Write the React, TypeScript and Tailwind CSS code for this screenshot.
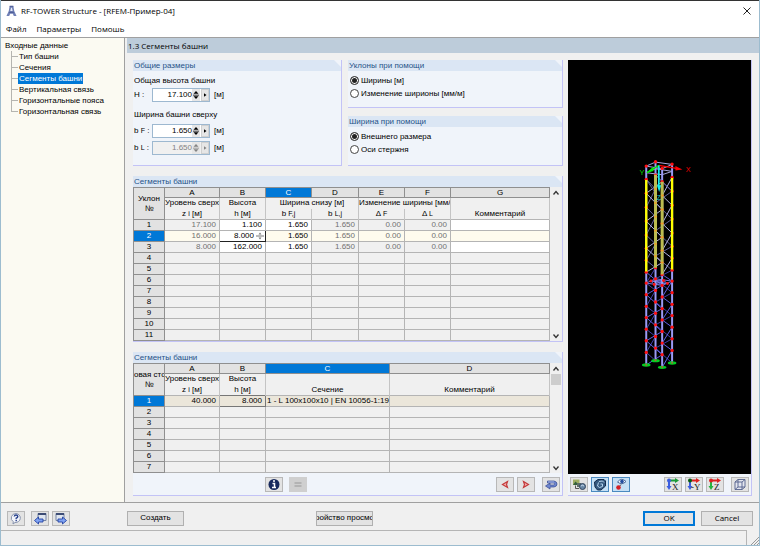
import { useState, type ReactNode } from "react";

const TREE = [
  "Тип башни",
  "Сечения",
  "Сегменты башни",
  "Вертикальная связь",
  "Горизонтальные пояса",
  "Горизонтальная связь",
];

const SEGMENTS = [
  { level: "17.100", height: "1.100", bf: "1.650", bl: "1.650", df: "0.00", dl: "0.00" },
  { level: "16.000", height: "8.000", bf: "1.650", bl: "1.650", df: "0.00", dl: "0.00" },
  { level: "8.000", height: "162.000", bf: "1.650", bl: "1.650", df: "0.00", dl: "0.00" },
];

function Panel({ title, children, className = "" }: { title: string; children: ReactNode; className?: string }) {
  return (
    <section className={`flex flex-col border-r border-b border-[#c3c3f6] bg-[#f0f4fa] ${className}`}>
      <h2 className="h-[11px] shrink-0 bg-[#dbe6f4] pl-px text-[8px] leading-[11px] text-[#1f5288] [clip-path:polygon(0_0,calc(100%-7px)_0,100%_7px,100%_100%,0_100%)]">
        {title}
      </h2>
      {children}
    </section>
  );
}

function Spinner({ id, label, value, disabled = false }: { id: string; label: ReactNode; value: string; disabled?: boolean }) {
  const [text, setText] = useState(value);
  return (
    <div className="flex items-center">
      <label htmlFor={id} className="w-[18px]">{label}</label>
      <div className={`flex h-[14px] w-[58px] border border-[#9db8d0] ${disabled ? "bg-[#f0f0f0] text-[#838383]" : "bg-white"}`}>
        <input
          id={id}
          value={text}
          disabled={disabled}
          onChange={(e) => setText(e.target.value)}
          className="w-[39px] bg-transparent text-right outline-none"
        />
        <button aria-label="Шаг" disabled={disabled} className="flex w-[8px] items-center justify-center bg-[#e6e6e6]">
          <svg viewBox="0 0 8 12" className="h-3 w-2" fill="currentColor">
            <path d="M4 2 6.500 4.800H1.500zM4 10 6.500 7.200H1.500zM1 5.700h6v.7H1z" />
          </svg>
        </button>
        <button aria-label="Список" disabled={disabled} className="ml-px flex w-[8px] items-center justify-center border border-[#d0d0d0] bg-[#e6e6e6]">
          <svg viewBox="0 0 6 8" className="h-2 w-[6px]" fill="currentColor">
            <path d="M2 2.200 4.500 4 2 5.800z" />
          </svg>
        </button>
      </div>
      <span className="ml-1">[м]</span>
    </div>
  );
}

function RadioRow({ name, label, defaultChecked }: { name: string; label: string; defaultChecked?: boolean }) {
  return (
    <label className="flex h-[13px] items-center gap-[2px]">
      <input
        type="radio"
        name={name}
        defaultChecked={defaultChecked}
        className="size-[9px] appearance-none rounded-full border border-[#444] bg-white checked:bg-[#222] checked:shadow-[inset_0_0_0_1px_white]"
      />
      {label}
    </label>
  );
}

function IconButton({ label, active, disabled, children }: { label: string; active?: boolean; disabled?: boolean; children: ReactNode }) {
  return (
    <button
      aria-label={label}
      disabled={disabled}
      className={`flex h-[15px] w-[18px] items-center justify-center border ${
        active ? "border-[#4b8ac0] bg-[#c5e0f5]" : disabled ? "border-[#cfcfcf] bg-[#cfcfcf]" : "border-[#b8b8b8] bg-[#e3e3e3]"
      }`}
    >
      <svg viewBox="0 0 16 13" className="h-[13px] w-4" fill="none">
        {children}
      </svg>
    </button>
  );
}

const letterCell = "h-[10px] border border-[#8f8f8f] bg-[#e2e2e2] p-0 font-normal leading-[9px]";
const letterActive = "h-[10px] border border-[#8f8f8f] bg-[#0078d7] p-0 font-normal leading-[9px] text-white";
const headCell = "h-[11px] overflow-hidden whitespace-nowrap border-x border-[#c4c4c4] p-0 font-normal leading-[10px]";
const rowHead = "h-[11px] border border-[#8f8f8f] bg-[#e2e2e2] p-0 font-normal leading-[10px]";
const rowHeadActive = "h-[11px] border border-[#8f8f8f] bg-[#0078d7] p-0 font-normal leading-[10px] text-white";
const cell = "h-[11px] border border-[#b4b4b4] p-0 pr-[3px] text-right leading-[10px]";

function ScrollBar({ thumb }: { thumb?: boolean }) {
  return (
    <div className="flex w-3 shrink-0 flex-col items-center justify-between bg-[#f0f0f0]">
      <div className="flex w-full flex-col items-center">
        <button aria-label="Вверх" className="h-[11px]">
          <svg viewBox="0 0 8 8" className="size-2" fill="none" stroke="#333" strokeWidth="1.3"><path d="m1.500 5.500 2.500-3 2.500 3" /></svg>
        </button>
        {thumb && <div className="h-[11px] w-[10px] bg-[#cdcdcd]" />}
      </div>
      <button aria-label="Вниз" className="h-[11px]">
        <svg viewBox="0 0 8 8" className="size-2" fill="none" stroke="#333" strokeWidth="1.3"><path d="m1.500 2.500 2.500 3 2.500-3" /></svg>
      </button>
    </div>
  );
}

function Sub({ children }: { children: ReactNode }) {
  return <small className="text-[7px] leading-none">{children}</small>;
}

function SegmentTable() {
  const [height, setHeight] = useState("8.000");
  return (
    <div className="flex">
      <div className="min-w-0 flex-1">
        <table className="w-full table-fixed border-collapse bg-[#f0f0f0]">
          <colgroup>
            <col className="w-[31px]" />
            <col className="w-[55px]" />
            <col className="w-[46px]" />
            <col className="w-[46px]" />
            <col className="w-[47px]" />
            <col className="w-[46px]" />
            <col className="w-[46px]" />
            <col />
          </colgroup>
          <thead>
            <tr>
              <th rowSpan={3} className="border border-[#8f8f8f] bg-[#e2e2e2] p-0 font-normal leading-[10px]">Уклон<br />№</th>
              <th className={letterCell}>A</th>
              <th className={letterCell}>B</th>
              <th className={letterActive}>C</th>
              <th className={letterCell}>D</th>
              <th className={letterCell}>E</th>
              <th className={letterCell}>F</th>
              <th className={letterCell}>G</th>
            </tr>
            <tr>
              <th className={headCell}>Уровень сверху</th>
              <th className={headCell}>Высота</th>
              <th className={headCell} colSpan={2}>Ширина снизу [м]</th>
              <th className={headCell} colSpan={2}>Изменение ширины [мм/м]</th>
              <th className={headCell} />
            </tr>
            <tr>
              <th className={headCell}>z <Sub>i</Sub> [м]</th>
              <th className={headCell}>h [м]</th>
              <th className={headCell}>b <Sub>F,j</Sub></th>
              <th className={headCell}>b <Sub>L,j</Sub></th>
              <th className={headCell}>Δ <Sub>F</Sub></th>
              <th className={headCell}>Δ <Sub>L</Sub></th>
              <th className={headCell}>Комментарий</th>
            </tr>
          </thead>
          <tbody>
            {SEGMENTS.map((s, i) => (
              <tr key={s.level} className={i === 1 ? "bg-[#fefbee]" : ""}>
                <th className={i === 1 ? rowHeadActive : rowHead}>{i + 1}</th>
                <td className={`${cell} text-[#707070]`}>{s.level}</td>
                {i === 1 ? (
                  <td className="h-[11px] border border-[#222] bg-white p-0">
                    <div className="flex h-[10px] items-center">
                      <input
                        aria-label="Высота h"
                        value={height}
                        onChange={(e) => setHeight(e.target.value)}
                        className="h-[10px] w-[34px] bg-transparent text-right leading-[10px] outline-none"
                      />
                      <svg viewBox="0 0 8 8" className="ml-[2px] size-2" fill="#777"><path d="M4 .5 5.500 2.500h-3zM0 3.500h8v1H0zM4 7.500 5.500 5.500h-3z" /></svg>
                    </div>
                  </td>
                ) : (
                  <td className={`${cell} bg-white`}>{s.height}</td>
                )}
                <td className={i === 1 ? cell : `${cell} bg-white`}>{s.bf}</td>
                <td className={`${cell} text-[#707070]`}>{s.bl}</td>
                <td className={`${cell} text-[#707070]`}>{s.df}</td>
                <td className={`${cell} text-[#707070]`}>{s.dl}</td>
                <td className={i === 1 ? cell : `${cell} bg-white`} />
              </tr>
            ))}
            {[4, 5, 6, 7, 8, 9, 10, 11].map((n) => (
              <tr key={n}>
                <th className={rowHead}>{n}</th>
                <td className={cell} /><td className={cell} /><td className={cell} /><td className={cell} />
                <td className={cell} /><td className={cell} /><td className={cell} />
              </tr>
            ))}
          </tbody>
        </table>
      </div>
      <ScrollBar />
    </div>
  );
}

function LegTable() {
  return (
    <div className="flex">
      <div className="min-w-0 flex-1">
        <table className="w-full table-fixed border-collapse bg-[#f0f0f0]">
          <colgroup>
            <col className="w-[31px]" />
            <col className="w-[55px]" />
            <col className="w-[46px]" />
            <col className="w-[124px]" />
            <col />
          </colgroup>
          <thead>
            <tr>
              <th rowSpan={3} className="overflow-hidden border border-[#8f8f8f] bg-[#e2e2e2] p-0 font-normal leading-[10px] whitespace-nowrap">овая сто<br />№</th>
              <th className={letterCell}>A</th>
              <th className={letterCell}>B</th>
              <th className={letterActive}>C</th>
              <th className={letterCell}>D</th>
            </tr>
            <tr>
              <th className={headCell}>Уровень сверху</th>
              <th className={headCell}>Высота</th>
              <th className={headCell} />
              <th className={headCell} />
            </tr>
            <tr>
              <th className={headCell}>z <Sub>i</Sub> [м]</th>
              <th className={headCell}>h [м]</th>
              <th className={headCell}>Сечение</th>
              <th className={headCell}>Комментарий</th>
            </tr>
          </thead>
          <tbody>
            <tr className="bg-[#ebe6da]">
              <th className={rowHeadActive}>1</th>
              <td className={cell}>40.000</td>
              <td className="h-[11px] border border-[#777] p-0 pr-[3px] text-right leading-[10px]">8.000</td>
              <td className="h-[11px] border border-[#b4b4b4] p-0 pl-px leading-[10px] whitespace-nowrap">1 - L 100x100x10 | EN 10056-1:19</td>
              <td className={cell} />
            </tr>
            {[2, 3, 4, 5, 6, 7].map((n) => (
              <tr key={n}>
                <th className={rowHead}>{n}</th>
                <td className={cell} /><td className={cell} /><td className={cell} /><td className={cell} />
              </tr>
            ))}
          </tbody>
        </table>
      </div>
      <ScrollBar thumb />
    </div>
  );
}

// x position and vertical shift of each tower leg
const LEGS = [
  { x: 80, dy: 0 },
  { x: 108, dy: -13 },
  { x: 158, dy: -6 },
  { x: 128, dy: 7 },
];
const LEVELS = [50, 90, 132, 174, 216, 258, 298, 334, 370, 403, 438, 473, 507, 542, 577, 612, 650];

function Tower() {
  return (
    <svg viewBox="0 0 184 414" preserveAspectRatio="xMidYMin meet" className="h-full w-full" fill="none">
      <g transform="translate(52 90) scale(.3333)">
        {LEGS.map((a, i) => {
          const b = LEGS[(i + 1) % 4];
          return LEVELS.slice(1, -1).map((y, j) => {
            const next = LEVELS[j + 2];
            const color = y < 370 ? (i > 1 ? "#b4b4e4" : "#62629e") : i > 1 ? "#6060e4" : "#4040a8";
            const flip = j % 2 === 0;
            return (
              <path
                key={`${i}-${j}`}
                d={`M${a.x} ${(flip ? y : next) + a.dy}L${b.x} ${(flip ? next : y) + b.dy}`}
                stroke={color}
                strokeWidth="3"
              />
            );
          });
        })}
        <path d="M80 90 108 132M108 76 128 97M128 97 158 126" stroke="#62629e" strokeWidth="3" />
        <path d="M80 50 108 38 158 45 128 58zM80 70 108 58 158 66 128 76z" stroke="#a8a8e0" strokeWidth="3" />
        <path d="M80 403 108 390 158 397 128 410zM94 397 104 407 144 404 132 395zM94 397 144 404M104 407 132 395" stroke="#7777dd" strokeWidth="3" />
        {LEGS.map((l) => (
          <path key={l.x} d={`M${l.x} ${50 + l.dy}V${650 + l.dy}`} stroke="#9a9af4" strokeWidth="6" />
        ))}
        {LEGS.map((l) =>
          LEVELS.slice(0, -1).map((y) => (
            <circle key={`${l.x}-${y}`} cx={l.x} cy={y + l.dy} r="5" fill="#ff1010" />
          )),
        )}
        <path d="M108 76V357M128 97V377" stroke="#bcbc50" strokeWidth="9" />
        <path d="M80 92V368M158 86V362" stroke="#ffff00" strokeWidth="7" />
        {[LEGS[1], LEGS[3]].map((l) =>
          LEVELS.slice(2, 8).map((y) => <circle key={`${l.x}-${y}`} cx={l.x} cy={y + l.dy} r="3" fill="#f59a22" />),
        )}
        <path d="M94 397h.1M104 407h.1M144 404h.1M132 395h.1" stroke="#ff1010" strokeWidth="9" strokeLinecap="round" />
        {LEGS.map((l) => (
          <g key={l.x}>
            <ellipse cx={l.x} cy={650 + l.dy} rx="13" ry="5" fill="#00d020" />
            <circle cx={l.x} cy={649 + l.dy} r="3" fill="#b0603a" />
          </g>
        ))}
        <path d="M118 48 170 57" stroke="#f00" strokeWidth="4" />
        <path d="m168 50 21 10-21 3z" fill="#f00" />
        <path d="M118 48 82 70" stroke="#0e0" strokeWidth="4" />
        <path d="m100 53-20 18 22-6z" fill="#0e0" />
        <path d="M118 48V112" stroke="#1ee" strokeWidth="5" />
        <path d="M112 108h13l-6 20z" fill="#1ee" />
        <text x="60" y="77" fontSize="22" fill="#0d0">Y</text>
        <text x="199" y="69" fontSize="22" fill="#e00">X</text>
        <text x="112" y="153" fontSize="20" fill="#1cc">Z</text>
      </g>
    </svg>
  );
}

function AxisIcon({ axis, h, v }: { axis: string; h: string; v: string }) {
  return (
    <>
      <path d="M3 2.500h8" stroke={h} strokeWidth="2" />
      <path d="m10 0 4 2.500L10 5z" fill={h} />
      <path d="M4 3v6" stroke={v} strokeWidth="2" />
      <path d="m1.500 8 2.500 4 2.500-4z" fill={v} />
      <circle cx="4" cy="2.500" r="2" fill={axis === "X" ? "#3b5ee0" : axis === "-Y" ? "#075c12" : "#d22"} />
      <text x={axis === "-Y" ? 5 : 7} y="12" fontSize="9" fill="#222" fontFamily="Liberation Serif, serif">{axis}</text>
    </>
  );
}

export default function App() {
  return (
    <div className="flex min-h-screen flex-col border-x border-[#9cbccf] bg-[#f0f0f0] font-['Liberation_Sans',Arial,sans-serif] text-[8px] leading-[10px] text-black">
      <header className="border-t border-[#333] bg-white">
        <div className="flex h-[20px] items-center pr-2 pl-[5px]">
          <svg viewBox="0 0 12 12" className="mr-1 h-3 w-[11px]" fill="none">
            <path d="M4 .5h4L9 6l2.500 5.500H8.500L7.500 9h-3l-1 2.500H.5L3 6z" fill="#6f7fb5" />
            <path d="M5.500 2.500h1L7.300 6H4.700z" fill="#e8ecf8" />
            <path d="M3.500 7.500h5M4 .8h4" stroke="#46558f" />
          </svg>
          <h1 className="flex-1 font-['Open_Sans',sans-serif] text-[8px]">RF-TOWER Structure - [RFEM-Пример-04]</h1>
          <button aria-label="Закрыть">
            <svg viewBox="0 0 8 8" className="size-2" stroke="#222" strokeWidth="1"><path d="m.5.5 7 7M7.500.5l-7 7" /></svg>
          </button>
        </div>
        <nav className="flex h-4 items-center gap-[10px] pb-px pl-[5px] font-['Open_Sans',sans-serif] text-[8px]">
          <button>Файл</button>
          <button>Параметры</button>
          <button>Помошь</button>
        </nav>
      </header>

      <div className="flex flex-1 border-y border-[#a0a0a0]">
        <aside className="w-[124px] shrink-0 border-r border-[#a0a0a0] bg-[#fbfaf2] pt-[2px] pl-1">
          <p className="h-[11px] leading-[11px]">Входные данные</p>
          <ul className="ml-[6px]">
            {TREE.map((item, i) => (
              <li key={item} className="flex h-[11px] items-center">
                <span className="flex h-full w-[7px] flex-col">
                  <span className="h-[6px] border-b border-l border-[#b5b5b0]" />
                  {i < TREE.length - 1 && <span className="h-[5px] border-l border-[#b5b5b0]" />}
                </span>
                <a href="#" className={i === 2 ? "bg-[#0078d7] px-px leading-[11px] text-white" : "px-px leading-[11px]"}>{item}</a>
              </li>
            ))}
          </ul>
        </aside>

        <main className="ml-[2px] flex min-w-0 flex-1 flex-col">
          <h2 className="h-[15px] bg-[#bdccda] pl-px font-['Open_Sans',sans-serif] text-[8px] leading-[15px]">1.3 Сегменты башни</h2>
          <div className="flex flex-1 gap-[5px] pt-[7px] pr-[7px] pb-[6px] pl-[6px]">
            <div className="flex min-w-0 flex-1 flex-col gap-[10px]">
              <div className="flex gap-[6px]">
                <Panel title="Общие размеры" className="h-[106px] min-w-0 flex-1">
                  <div className="flex flex-col px-px pt-[5px]">
                    <p className="mb-[2px]">Общая высота башни</p>
                    <Spinner id="total-height" label="H :" value="17.100" />
                    <p className="mt-2 mb-1">Ширина башни сверху</p>
                    <div className="flex flex-col gap-[3px]">
                      <Spinner id="width-f" label={<>b <Sub>F</Sub> :</>} value="1.650" />
                      <Spinner id="width-l" label={<>b <Sub>L</Sub> :</>} value="1.650" disabled />
                    </div>
                  </div>
                </Panel>
                <div className="flex w-1/2 flex-col gap-2">
                  <Panel title="Уклоны при помощи" className="h-12">
                    <div className="px-[2px] pt-[3px]">
                      <RadioRow name="slope" label="Ширины [м]" defaultChecked />
                      <RadioRow name="slope" label="Изменение ширионы [мм/м]" />
                    </div>
                  </Panel>
                  <Panel title="Ширина при помощи" className="flex-1">
                    <div className="px-[2px] pt-[3px]">
                      <RadioRow name="width" label="Внешнего размера" defaultChecked />
                      <RadioRow name="width" label="Оси стержня" />
                    </div>
                  </Panel>
                </div>
              </div>
              <Panel title="Сегменты башни">
                <SegmentTable />
              </Panel>
              <Panel title="Сегменты башни" className="flex-1">
                <LegTable />
                <div className="flex flex-1 items-center pr-[2px] pl-[132px]">
                  <IconButton label="Информация">
                    <circle cx="8" cy="6.500" r="5.500" fill="#182a5e" />
                    <path d="M7 3h2M6.500 5.500H8.500v4M6 9.500h4" stroke="#fff" strokeWidth="1.500" />
                  </IconButton>
                  <span className="ml-[6px] flex flex-1">
                    <IconButton label="Равно" disabled>
                      <path d="M4.500 5h7M4.500 8h7" stroke="#aaa" strokeWidth="1.500" />
                    </IconButton>
                  </span>
                  <div className="flex gap-[3px]">
                    <IconButton label="Предыдущий">
                      <path d="m10.500 3.500-5 3 5 3-1-3z" stroke="#c43a3a" strokeWidth="1.200" fill="#f2b0b0" />
                    </IconButton>
                    <IconButton label="Следующий">
                      <path d="m5.500 3.500 5 3-5 3 1-3z" stroke="#c43a3a" strokeWidth="1.200" fill="#f2b0b0" />
                    </IconButton>
                  </div>
                  <span className="ml-[7px] flex">
                    <IconButton label="Назад">
                      <path d="M4.500 3h6.500q3 .5 3 3t-3 3H7v2L2.500 8 7 5v2h3.500q1-.2 1-1t-1-1h-6z" fill="#6f87d0" stroke="#34488f" strokeWidth=".7" />
                      <path d="M5 4h6" stroke="#b9c7f0" strokeWidth=".8" />
                    </IconButton>
                  </span>
                </div>
              </Panel>
            </div>

            <section className="flex w-[184px] shrink-0 flex-col border-r border-b border-[#c3c3f6] bg-[#f0f4fa]">
              <div className="min-h-0 flex-1 bg-black">
                <Tower />
              </div>
              <div className="flex h-[21px] items-center gap-[3px] pr-[2px] pl-[2px]">
                <IconButton label="Показать модель">
                  <path d="M2 1.500h6.500v5.500H2z" fill="#9fae62" />
                  <path d="m2 7 2.500-3.500L8 7z" fill="#35613b" />
                  <path d="M6 5h4v4H6z" fill="#5f6f68" />
                  <path d="M4.500 7.500v3H8" stroke="#555" />
                  <circle cx="11.500" cy="8.500" r="3" fill="#6987a5" stroke="#34465e" />
                  <path d="M10 8q1.500-1.500 3 0" stroke="#cde" />
                </IconButton>
                <IconButton label="Рендеринг" active>
                  <path d="M2.500 4 6 1.500h6L13.500 3v5L9 12H5.500L3 9z" fill="#35597f" stroke="#132c4d" />
                  <path d="M6.500 4.500 5.500 8l2 1.500 3-1V6h-2M7 3.500l3.500-.5L12 4.500" stroke="#b5d4ee" />
                </IconButton>
                <IconButton label="Вид" active>
                  <path d="M4.500 4q4-5 8.500-.5-4 4-8.500.5z" fill="#f5f9ff" stroke="#486795" />
                  <circle cx="9" cy="3.500" r="1.800" fill="#214da0" />
                  <path d="M8 6.500 6 9" stroke="#555" />
                  <circle cx="5.500" cy="9.500" r="2.300" fill="#d41f25" />
                </IconButton>
                <span className="flex-1" />
                <IconButton label="Вид по X"><AxisIcon axis="X" h="#1b9b38" v="#3b5ee0" /></IconButton>
                <IconButton label="Вид против Y"><AxisIcon axis="-Y" h="#d22" v="#3b5ee0" /></IconButton>
                <IconButton label="Вид по Z"><AxisIcon axis="Z" h="#d22" v="#26b53f" /></IconButton>
                <span className="ml-[4px] flex">
                  <IconButton label="Изометрия">
                    <path d="M3 4h7v7.500H3zM6 1.500h7V9H6zM3 4l3-2.500M10 4l3-2.500M3 11.500 6 9M10 11.500 13 9" fill="#e4ebff" fillOpacity=".4" stroke="#53618c" strokeWidth=".9" />
                  </IconButton>
                </span>
              </div>
            </section>
          </div>
        </main>
      </div>

      <footer>
        <div className="flex h-[27px] items-center pt-[3px] pr-[6px] pl-[6px]">
          <div className="flex w-[120px] items-center">
            <IconButton label="Справка">
              <path d="M8 1.500a4.800 4.500 0 1 1-1 9L5 12l.3-2.300A4.800 4.500 0 0 1 8 1.500z" fill="#f3f5fb" stroke="#8793ad" />
              <path d="M6.300 4.500Q6.500 3 8 3t1.800 1.500Q9.800 5.700 8.200 6.200v1M8.200 8v1.200" stroke="#28418c" strokeWidth="1.400" />
            </IconButton>
            <span className="ml-[6px] flex gap-[3px]">
              <IconButton label="Предыдущая таблица">
                <path d="M6 1.500h8v7H6z" fill="#dfe5ef" stroke="#7484a5" />
                <path d="M6 2h8" stroke="#3c4c75" strokeWidth="2" />
                <path d="M6.500 5 2.500 8.500l4 3.500v-2H11V7H6.500z" fill="#7fa2f2" stroke="#2443a4" strokeWidth=".9" />
              </IconButton>
              <IconButton label="Следующая таблица">
                <path d="M3 1.500h8v7H3z" fill="#dfe5ef" stroke="#7484a5" />
                <path d="M3 2h8" stroke="#3c4c75" strokeWidth="2" />
                <path d="m9.500 5 4 3.500-4 3.500v-2H5V7h4.500z" fill="#7fa2f2" stroke="#2443a4" strokeWidth=".9" />
              </IconButton>
            </span>
          </div>
          <button className="h-[15px] w-[57px] border border-[#b0b0b0] bg-[#e3e3e3]">Создать</button>
          <button className="ml-[132px] flex h-[15px] w-[57px] items-center justify-center overflow-hidden border border-[#b0b0b0] bg-[#e3e3e3] whitespace-nowrap">ройство просмо</button>
          <span className="flex-1" />
          <button className="h-[15px] w-[52px] border-2 border-[#0078d7] bg-[#e3e3e3] font-['Open_Sans',sans-serif] leading-[10px]">OK</button>
          <button className="ml-[6px] h-[15px] w-[52px] border border-[#b0b0b0] bg-[#e3e3e3] font-['Open_Sans',sans-serif]">Cancel</button>
        </div>
        <div className="flex h-[16px] items-end justify-between border-b border-[#9cbccf]">
          <div className="mr-[3px] h-[15px] flex-1 border-t border-r border-[#b5b5b5]" />
          <svg viewBox="0 0 9 9" className="size-[9px]" stroke="#999"><path d="M9 1 1 9M9 4 4 9M9 7 7 9" /></svg>
        </div>
      </footer>
    </div>
  );
}
